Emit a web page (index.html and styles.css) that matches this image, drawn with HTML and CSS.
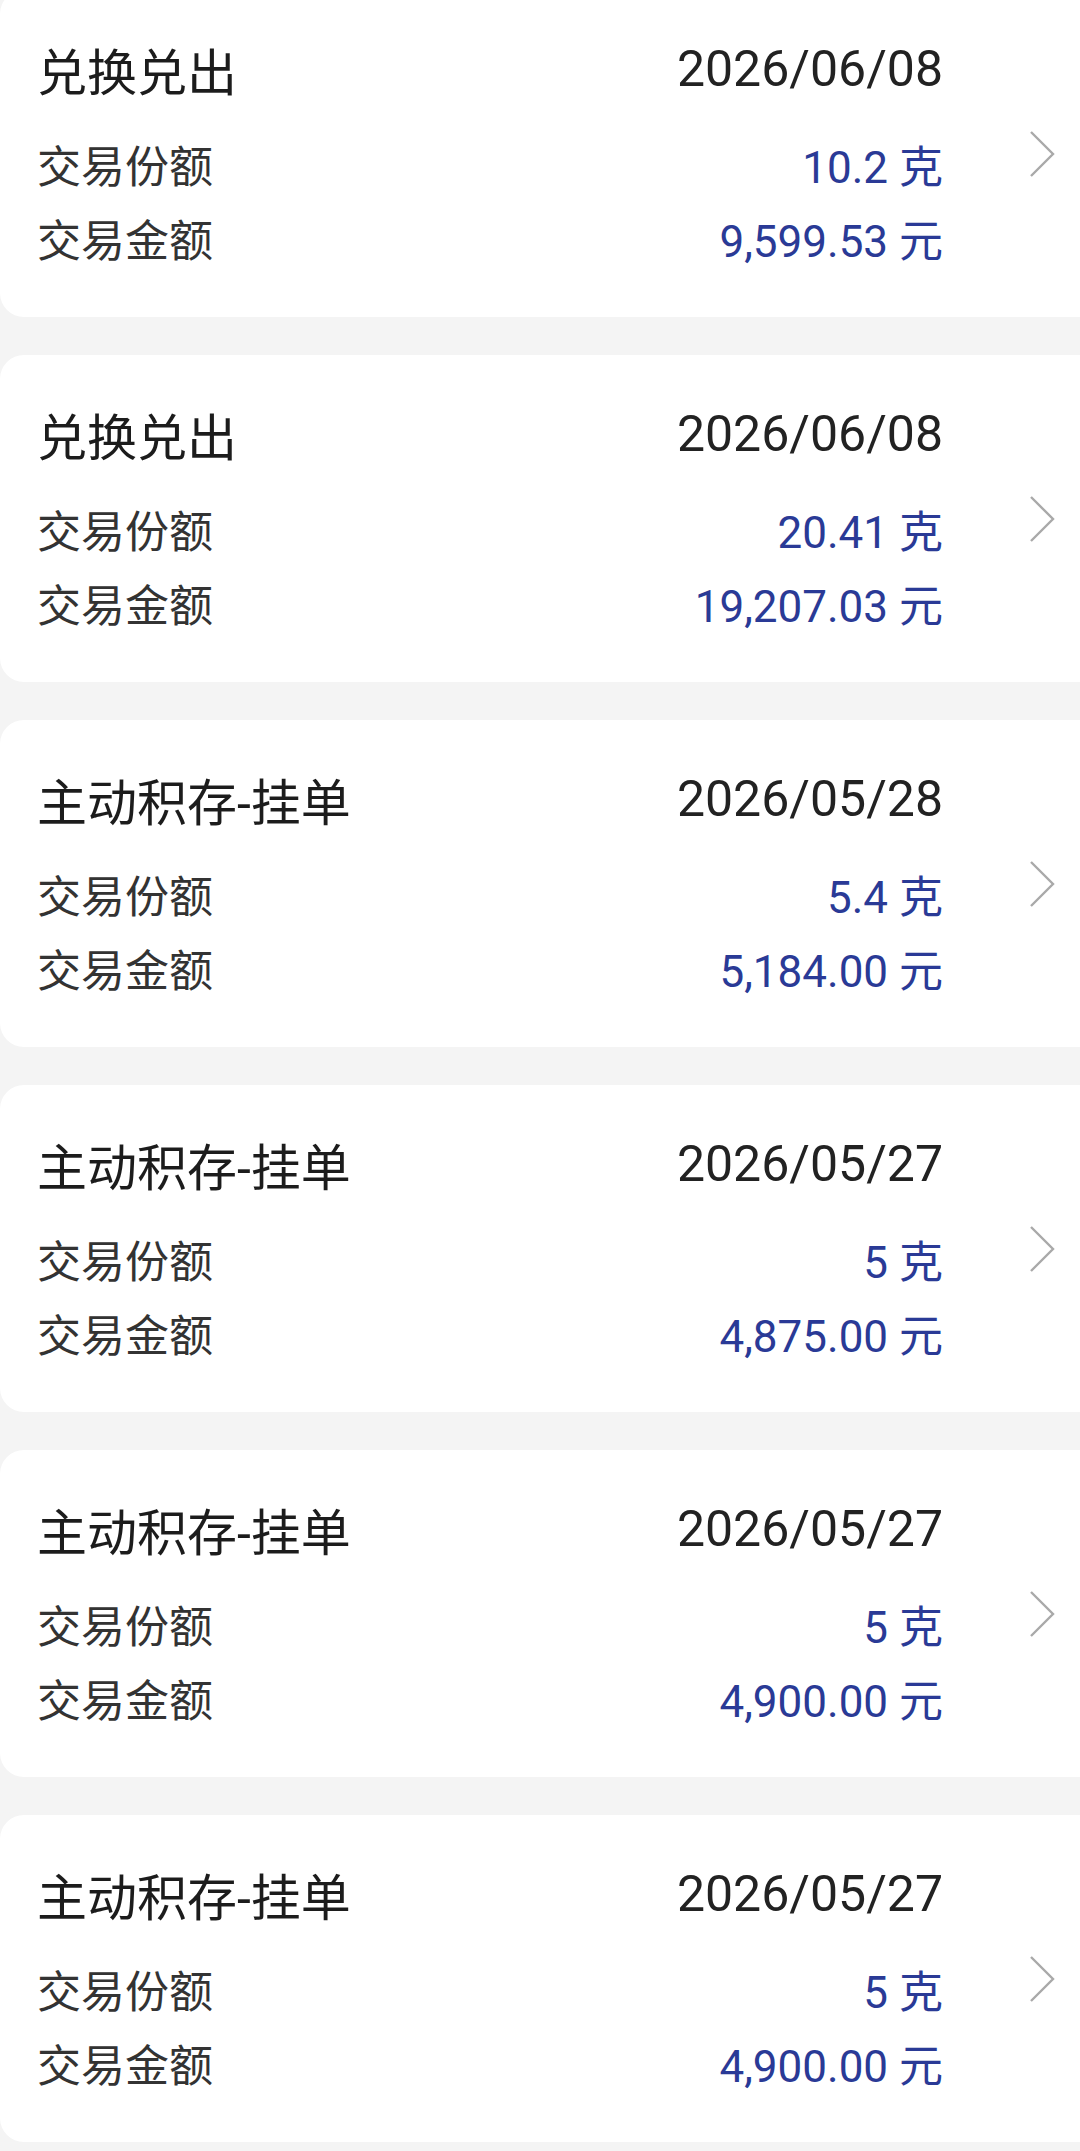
FILE: index.html
```html
<!DOCTYPE html>
<html lang="zh-CN">
<head>
<meta charset="utf-8">
<title>交易记录</title>
<link rel="stylesheet" href="styles.css">
</head>
<body>
<div class="list">
  <div class="card">
    <div class="content">
      <div class="head"><span class="title">兑换兑出</span><span class="date">2026/06/08</span></div>
      <div class="row"><span class="label">交易份额</span><span class="value">10.2 克</span></div>
      <div class="row"><span class="label">交易金额</span><span class="value">9,599.53 元</span></div>
    </div>
    <div class="arrow"><svg width="26" height="48" viewBox="0 0 26 48"><polyline points="2,2 24,24 2,46" fill="none" stroke="#a9a9a9" stroke-width="2.4"/></svg></div>
  </div>
  <div class="card">
    <div class="content">
      <div class="head"><span class="title">兑换兑出</span><span class="date">2026/06/08</span></div>
      <div class="row"><span class="label">交易份额</span><span class="value">20.41 克</span></div>
      <div class="row"><span class="label">交易金额</span><span class="value">19,207.03 元</span></div>
    </div>
    <div class="arrow"><svg width="26" height="48" viewBox="0 0 26 48"><polyline points="2,2 24,24 2,46" fill="none" stroke="#a9a9a9" stroke-width="2.4"/></svg></div>
  </div>
  <div class="card">
    <div class="content">
      <div class="head"><span class="title">主动积存-挂单</span><span class="date">2026/05/28</span></div>
      <div class="row"><span class="label">交易份额</span><span class="value">5.4 克</span></div>
      <div class="row"><span class="label">交易金额</span><span class="value">5,184.00 元</span></div>
    </div>
    <div class="arrow"><svg width="26" height="48" viewBox="0 0 26 48"><polyline points="2,2 24,24 2,46" fill="none" stroke="#a9a9a9" stroke-width="2.4"/></svg></div>
  </div>
  <div class="card">
    <div class="content">
      <div class="head"><span class="title">主动积存-挂单</span><span class="date">2026/05/27</span></div>
      <div class="row"><span class="label">交易份额</span><span class="value">5 克</span></div>
      <div class="row"><span class="label">交易金额</span><span class="value">4,875.00 元</span></div>
    </div>
    <div class="arrow"><svg width="26" height="48" viewBox="0 0 26 48"><polyline points="2,2 24,24 2,46" fill="none" stroke="#a9a9a9" stroke-width="2.4"/></svg></div>
  </div>
  <div class="card">
    <div class="content">
      <div class="head"><span class="title">主动积存-挂单</span><span class="date">2026/05/27</span></div>
      <div class="row"><span class="label">交易份额</span><span class="value">5 克</span></div>
      <div class="row"><span class="label">交易金额</span><span class="value">4,900.00 元</span></div>
    </div>
    <div class="arrow"><svg width="26" height="48" viewBox="0 0 26 48"><polyline points="2,2 24,24 2,46" fill="none" stroke="#a9a9a9" stroke-width="2.4"/></svg></div>
  </div>
  <div class="card">
    <div class="content">
      <div class="head"><span class="title">主动积存-挂单</span><span class="date">2026/05/27</span></div>
      <div class="row"><span class="label">交易份额</span><span class="value">5 克</span></div>
      <div class="row"><span class="label">交易金额</span><span class="value">4,900.00 元</span></div>
    </div>
    <div class="arrow"><svg width="26" height="48" viewBox="0 0 26 48"><polyline points="2,2 24,24 2,46" fill="none" stroke="#a9a9a9" stroke-width="2.4"/></svg></div>
  </div>
</div>
</body>
</html>
```

FILE: styles.css
```css
html, body {
  margin: 0;
  padding: 0;
  background: #f4f4f4;
}
body {
  font-family: Roboto, "Noto Sans CJK SC", sans-serif;
  overflow: hidden;
}
.list {
  display: flex;
  flex-direction: column;
  gap: 38px;
  margin-top: -10px;
}
.card {
  display: flex;
  align-items: center;
  height: 327px;
  box-sizing: border-box;
  background: #ffffff;
  border-radius: 24px 0 0 24px;
  padding-left: 37px;
}
.content {
  width: 906px;
  display: flex;
  flex-direction: column;
  align-self: flex-start;
  padding-top: 47px;
}
.head {
  display: flex;
  justify-content: space-between;
  align-items: center;
  height: 64px;
  margin-bottom: 26px;
}
.title {
  font-size: 50px;
  color: #1c1c1c;
}
.date {
  font-size: 50px;
  color: #222222;
}
.row {
  display: flex;
  justify-content: space-between;
  align-items: center;
  height: 74px;
}
.label {
  font-size: 44px;
  color: #333333;
}
.value {
  font-size: 44px;
  color: #2a3a96;
}
.arrow {
  margin-left: 86px;
  width: 26px;
  height: 48px;
  display: flex;
}
```
